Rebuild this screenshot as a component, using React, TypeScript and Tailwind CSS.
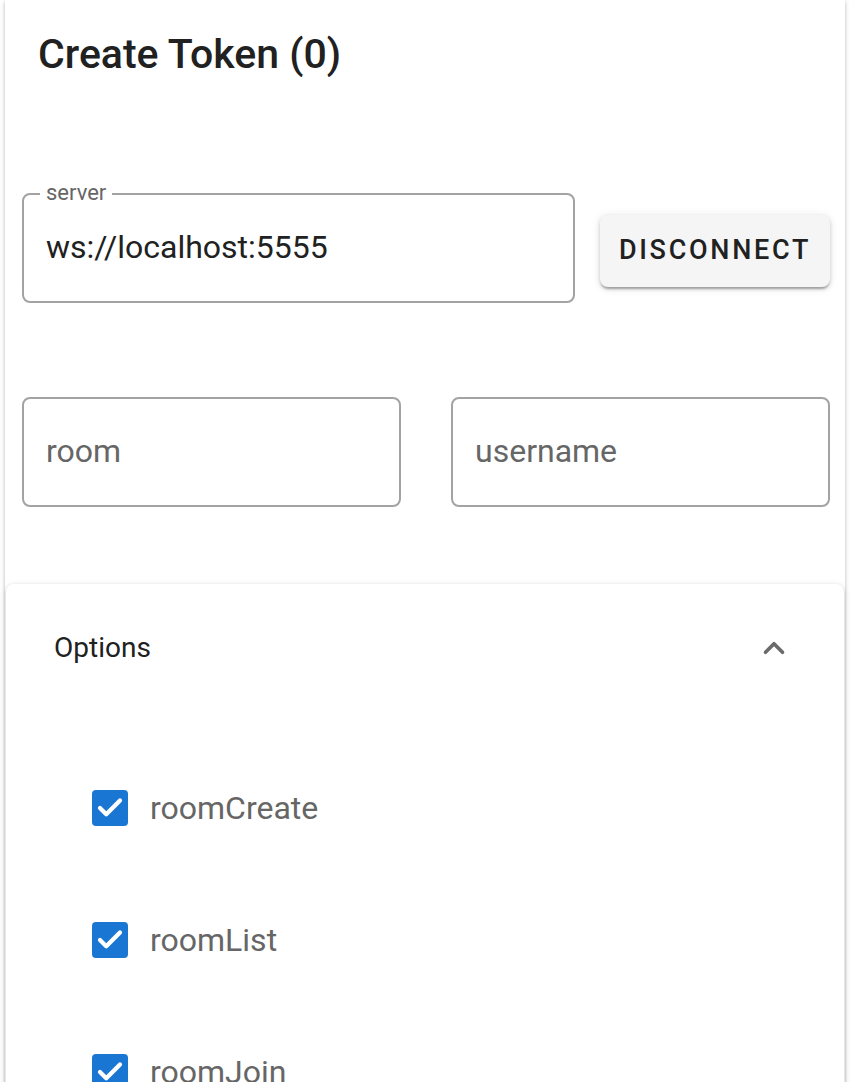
import { ChevronUp, Check } from 'lucide-react';

const OPTIONS = ['roomCreate', 'roomList', 'roomJoin'];

function OutlinedField({ label, value, placeholder, className }: { label?: string; value?: string; placeholder?: string; className?: string }) {
  return (
    <div className={`relative h-[110px] rounded-[8px] border-2 border-[#a3a3a3] flex items-center px-[22px] ${className ?? ''}`}>
      {label && (
        <span className="absolute left-[16px] top-[-15px] bg-white px-[6px] text-[22px] leading-[26px] text-[#666666]">
          {label}
        </span>
      )}
      {value ? (
        <span className="text-[32px] text-[#212121] mt-[-2px]">{value}</span>
      ) : (
        <span className="text-[32px] text-[#666666] mt-[-2px]">{placeholder}</span>
      )}
    </div>
  );
}

export default function App() {
  return (
    <div className="min-h-screen bg-white px-[5px] overflow-hidden" style={{ fontFamily: 'Roboto, "Liberation Sans", sans-serif' }}>
      <div className="bg-white min-h-[1082px] shadow-[0_2px_3px_rgba(0,0,0,0.2),0_1px_6px_rgba(0,0,0,0.12)]">
        {/* Title */}
        <h1 className="pl-[33px] pt-[30px] text-[41px] leading-[48px] font-medium text-[#212121]">
          Create Token (0)
        </h1>

        {/* Server row */}
        <div className="flex items-center gap-[25px] pl-[17px] pr-[15px] mt-[115px]">
          <OutlinedField label="server" value="ws://localhost:5555" className="w-[553px]" />
          <button className="h-[72px] mt-[5px] flex-1 rounded-[8px] bg-[#f5f5f5] text-[27px] font-medium tracking-[0.1em] text-[#212121] shadow-[0_3px_2px_-1px_rgba(0,0,0,0.25),0_2px_4px_rgba(0,0,0,0.14),0_1px_10px_rgba(0,0,0,0.1)]">
            DISCONNECT
          </button>
        </div>

        {/* Room / username */}
        <div className="grid grid-cols-2 gap-[50px] pl-[17px] pr-[15px] mt-[94px]">
          <OutlinedField placeholder="room" />
          <OutlinedField placeholder="username" />
        </div>

        {/* Options accordion */}
        <div className="mx-[1px] mt-[77px] rounded-t-[8px] bg-white shadow-[0_2px_2px_-1px_rgba(0,0,0,0.2),0_1px_3px_rgba(0,0,0,0.14),0_1px_6px_rgba(0,0,0,0.1)] min-h-[520px]">
          <div className="flex items-center justify-between h-[128px] pl-[48px] pr-[53px]">
            <span className="text-[28px] text-[#212121]">Options</span>
            <ChevronUp className="w-[34px] h-[34px] text-[#6b6b6b]" strokeWidth={2.6} />
          </div>
          <div className="flex flex-col gap-[96px] pl-[86px] pt-[78px]">
            {OPTIONS.map((o) => (
              <label key={o} className="flex items-center gap-[22px] h-[36px]">
                <span className="w-[36px] h-[36px] rounded-[4px] bg-[#1976d2] flex items-center justify-center">
                  <Check className="w-[30px] h-[30px] text-white" strokeWidth={3.4} />
                </span>
                <span className="text-[32px] text-[#666666]">{o}</span>
              </label>
            ))}
          </div>
        </div>
      </div>
    </div>
  );
}
